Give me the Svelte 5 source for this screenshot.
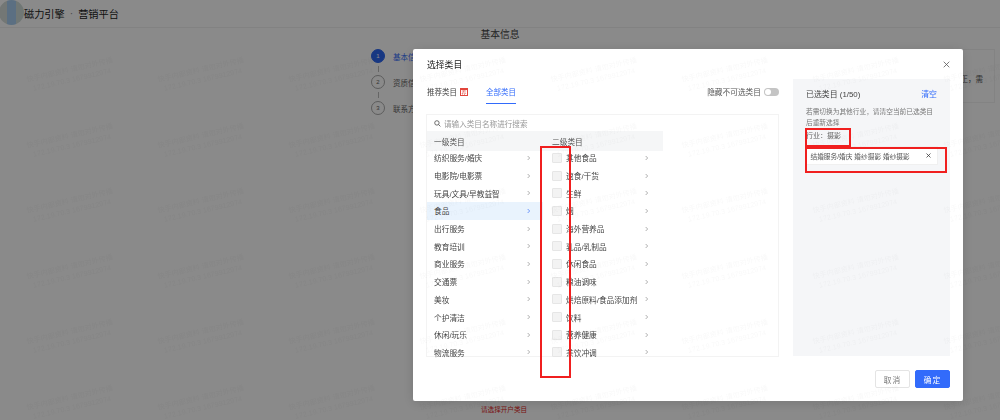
<script>
  const firstLevel = ['纺织服务/婚庆', '电影院/电影票', '玩具/文具/早教益智', '食品', '出行服务', '教育培训', '商业服务', '交通票', '美妆', '个护清洁', '休闲/玩乐', '物流服务'];
  const secondLevel = ['其他食品', '速食/干货', '生鲜', '烟', '海外营养品', '乳品/乳制品', '休闲食品', '粮油调味', '烘焙原料/食品添加剂', '饮料', '营养健康', '茶饮冲调'];
  const activeIndex = 3;

  const marks = [];
  for (let row = 0; row < 6; row++) {
    for (let col = 0; col < 8; col++) {
      marks.push({ left: col * 131 + 71, top: row * 65.5 + 75 });
    }
  }
</script>

<div class="page">
  <header class="topbar">
    <span class="logo"></span>
    <span class="brand">磁力引擎</span>
    <span class="dot">·</span>
    <span class="brand">营销平台</span>
  </header>
  <main class="content">
    <h1>基本信息</h1>
    <ol class="steps">
      <li class="step on"><span class="num">1</span><span>基本信息</span></li>
      <li class="line"></li>
      <li class="step"><span class="num">2</span><span>资质信息</span></li>
      <li class="line"></li>
      <li class="step"><span class="num">3</span><span>联系方式</span></li>
    </ol>
    <div class="notice">如需修正，需</div>
    <p class="error">请选择开户类目</p>
  </main>
</div>

<div class="mask"></div>

<section class="modal">
  <div class="title-row">
    <span class="title">选择类目</span>
    <svg class="close" viewBox="0 0 10 10" width="7" height="7"><path d="M1 1l8 8M9 1l-8 8" stroke="#555" stroke-width="1.1" fill="none" /></svg>
  </div>

  <div class="body">
    <div class="left">
      <div class="tabs">
        <span class="tab">推荐类目<i class="hot">荐</i></span>
        <span class="tab on">全部类目</span>
        <span class="hide">隐藏不可选类目<span class="switch"><span></span></span></span>
      </div>

      <div class="box">
        <div class="search">
          <svg viewBox="0 0 12 12" width="7" height="7"><circle cx="5" cy="5" r="3.8" stroke="#444" stroke-width="1.3" fill="none" /><path d="M8 8l3 3" stroke="#444" stroke-width="1.3" /></svg>
          <span>请输入类目名称进行搜索</span>
        </div>
        <div class="columns">
          <div class="col first">
            <div class="col-head">一级类目</div>
            {#each firstLevel as name, i}
              <div class="row" class:active={i === activeIndex}>
                <span>{name}</span>
                <svg class="chev" viewBox="0 0 6 8" width="4" height="6"><path d="M1 1l3 3-3 3" stroke="currentColor" fill="none" /></svg>
              </div>
            {/each}
          </div>
          <div class="col second">
            <div class="col-head">二级类目</div>
            {#each secondLevel as name}
              <div class="row">
                <span class="check"></span>
                <span class="name">{name}</span>
                <svg class="chev" viewBox="0 0 6 8" width="4" height="6"><path d="M1 1l3 3-3 3" stroke="currentColor" fill="none" /></svg>
              </div>
            {/each}
          </div>
        </div>
      </div>
    </div>

    <aside class="picked">
      <div class="picked-head">
        <span>已选类目 (1/50)</span>
        <span class="clear">清空</span>
      </div>
      <p class="tip">若需切换为其他行业，请清空当前已选类目后重新选择</p>
      <p class="industry">行业：摄影</p>
      <div class="tag">
        <span>结婚服务/婚庆 婚纱摄影 婚纱摄影</span>
        <svg viewBox="0 0 10 10" width="5" height="5"><path d="M1 1l8 8M9 1l-8 8" stroke="#333" stroke-width="1.5" fill="none" /></svg>
      </div>
    </aside>
  </div>

  <footer class="actions">
    <button class="btn">取消</button>
    <button class="btn primary">确定</button>
  </footer>
</section>

<div class="marks">
  {#each marks as m}
    <span class="mark" style="left:{m.left}px;top:{m.top}px">快手内部资料 请勿对外传播<br />172.19.70.3 1679912974</span>
  {/each}
</div>

<div class="note" style="left:540px;top:146px;width:31px;height:232px"></div>
<div class="note" style="left:805px;top:128px;width:46px;height:19px"></div>
<div class="note" style="left:805px;top:147px;width:142px;height:26px"></div>

<style>
  :global(body) {
    margin: 0;
    height: 420px;
    overflow: hidden;
    font-family: "Liberation Sans", "Noto Sans CJK SC", sans-serif;
    color: #333;
  }

  .page {
    height: 420px;
    background: #fff;
    overflow: hidden;
  }

  .topbar {
    display: flex;
    align-items: center;
    gap: 3px;
    height: 27px;
    border-bottom: 1px solid #f0f0f0;
    font-size: 10.2px;
    color: #222;
  }

  .logo {
    width: 25px;
    height: 25px;
    margin-left: -1px;
    margin-top: -3px;
    margin-right: -3px;
    border-radius: 50%;
    background: linear-gradient(90deg, #d5dcd8 0 30%, #a8cdf0 30% 70%, #cfdcd8 70%);
  }

  .dot {
    color: #888;
    margin: 0 2px;
  }

  .content {
    position: relative;
    height: 392px;
  }

  h1 {
    margin: 0;
    text-align: center;
    font-size: 9.8px;
    line-height: 14px;
    font-weight: 400;
    color: #444;
  }

  .steps {
    list-style: none;
    margin: 0;
    padding: 0;
    position: absolute;
    left: 371px;
    top: 21px;
    font-size: 7.5px;
    color: #666;
  }

  .step {
    display: flex;
    align-items: center;
    gap: 8px;
    height: 14px;
    white-space: nowrap;
  }

  .step.on {
    color: #326bfb;
  }

  .num {
    width: 12px;
    height: 12px;
    border: 1px solid #aaa;
    border-radius: 50%;
    display: flex;
    align-items: center;
    justify-content: center;
    font-size: 6px;
  }

  .on .num {
    background: #2c66f0;
    border-color: #2c66f0;
    color: #fff;
  }

  .line {
    width: 1px;
    height: 6px;
    margin: 3px 0 3px 7px;
    background: #bbb;
  }

  .notice {
    position: absolute;
    left: 500px;
    top: 21px;
    width: 495px;
    height: 54px;
    box-sizing: border-box;
    display: flex;
    align-items: center;
    justify-content: flex-end;
    padding-right: 11px;
    padding-top: 5px;
    border: 1px solid #f2f2f2;
    font-size: 7.5px;
    color: #555;
  }

  .error {
    position: absolute;
    left: 481px;
    top: 376px;
    margin: 0;
    font-size: 6.6px;
    color: #e2231a;
  }

  .mask {
    position: fixed;
    inset: 0;
    background: rgba(0, 0, 0, 0.46);
  }

  .modal {
    position: fixed;
    left: 413px;
    top: 49px;
    width: 550px;
    height: 352px;
    box-sizing: border-box;
    padding: 0 13px;
    background: #fff;
    border-radius: 2px;
    overflow: hidden;
    font-size: 7.7px;
    box-shadow: 0 2px 12px rgba(0, 0, 0, 0.15);
  }

  .title-row {
    display: flex;
    justify-content: space-between;
    align-items: center;
    height: 30px;
    padding-left: 1px;
  }

  .title {
    font-size: 8.8px;
    color: #222;
  }

  .body {
    display: flex;
    gap: 14px;
  }

  .left {
    width: 353px;
  }

  .tabs {
    display: flex;
    align-items: center;
    gap: 18px;
    height: 25px;
    margin-bottom: 10px;
    padding-left: 1px;
    color: #444;
  }

  .tab {
    display: flex;
    align-items: center;
    gap: 3px;
    height: 25px;
    font-size: 7.5px;
  }

  .tab.on {
    color: #326bfb;
    box-shadow: inset 0 -1px 0 #326bfb;
  }

  .hot {
    width: 8px;
    height: 8px;
    background: #fff;
    border: 1px solid #e2453c;
    border-top-width: 2px;
    box-sizing: border-box;
    color: #e2453c;
    font-size: 5px;
    line-height: 5px;
    font-style: normal;
    text-align: center;
  }

  .hide {
    margin-left: auto;
    display: flex;
    align-items: center;
    gap: 3px;
    color: #555;
  }

  .switch {
    display: block;
    width: 15px;
    height: 8px;
    border-radius: 4px;
    background: #c4c4c4;
    position: relative;
  }

  .switch span {
    position: absolute;
    left: 1px;
    top: 1px;
    width: 6px;
    height: 6px;
    border-radius: 50%;
    background: #fff;
  }

  .box {
    border: 1px solid #f3f3f3;
    height: 243px;
    box-sizing: border-box;
  }

  .search {
    display: flex;
    align-items: center;
    gap: 3px;
    height: 16px;
    padding-left: 7px;
    color: #999;
    font-size: 7.6px;
  }

  .columns {
    display: flex;
  }

  .col.first {
    width: 116px;
  }

  .col.second {
    width: 120px;
  }

  .col-head {
    display: flex;
    align-items: center;
    height: 20px;
    margin-bottom: -2px;
    padding-left: 7px;
    background: #f5f6f7;
    color: #555;
  }

  .second .col-head {
    padding-left: 9px;
  }

  .row {
    position: relative;
    display: flex;
    align-items: center;
    height: 17.7px;
    padding: 0 12px 0 7px;
    color: #444;
    white-space: nowrap;
  }

  .second .row {
    padding-left: 9px;
    padding-right: 14px;
  }

  .row.active {
    background: #e9f3fd;
  }

  .chev {
    margin-left: auto;
    color: #888;
  }

  .active .chev {
    color: #326bfb;
  }

  .check {
    width: 8px;
    height: 8px;
    margin-right: 4px;
    flex: none;
    border: 1px solid #e6e6e6;
    border-radius: 1px;
    background: #f3f3f3;
  }

  .picked {
    width: 157px;
    height: 277px;
    box-sizing: border-box;
    padding: 7px 13px;
    background: #f5f6f8;
    color: #555;
    font-size: 7.5px;
  }

  .picked-head {
    display: flex;
    justify-content: space-between;
    font-size: 7.9px;
    color: #444;
    height: 14px;
    align-items: center;
  }

  .clear {
    color: #326bfb;
  }

  .tip {
    margin: 5.5px 0 0;
    line-height: 11px;
    color: #777;
    font-size: 6.7px;
  }

  .industry {
    margin: 2.5px 0 0;
    line-height: 12px;
    font-size: 7px;
    color: #666;
  }

  .tag {
    display: flex;
    align-items: center;
    justify-content: space-between;
    height: 17px;
    margin-top: 5px;
    padding: 0 6px 0 4.5px;
    background: #fff;
    box-shadow: 0 0 0 1px #f0f0f0;
    font-size: 6.7px;
    color: #555;
    white-space: nowrap;
  }

  .actions {
    display: flex;
    justify-content: flex-end;
    gap: 5px;
    margin-top: 13px;
  }

  .btn {
    width: 35px;
    height: 18px;
    padding: 0;
    border: 1px solid #e4e4e4;
    border-radius: 2px;
    background: #fff;
    color: #777;
    font: inherit;
    letter-spacing: 1px;
  }

  .btn.primary {
    background: #326bfb;
    border-color: #326bfb;
    color: #fff;
  }

  .marks {
    position: fixed;
    inset: 0;
    overflow: hidden;
    pointer-events: none;
  }

  .mark {
    position: absolute;
    transform: translate(-50%, -50%) rotate(-13deg);
    text-align: center;
    white-space: nowrap;
    font-size: 7.2px;
    line-height: 10px;
    color: rgba(0, 0, 0, 0.032);
  }

  .note {
    position: fixed;
    box-sizing: border-box;
    border: 2px solid #f01f1f;
  }
</style>
